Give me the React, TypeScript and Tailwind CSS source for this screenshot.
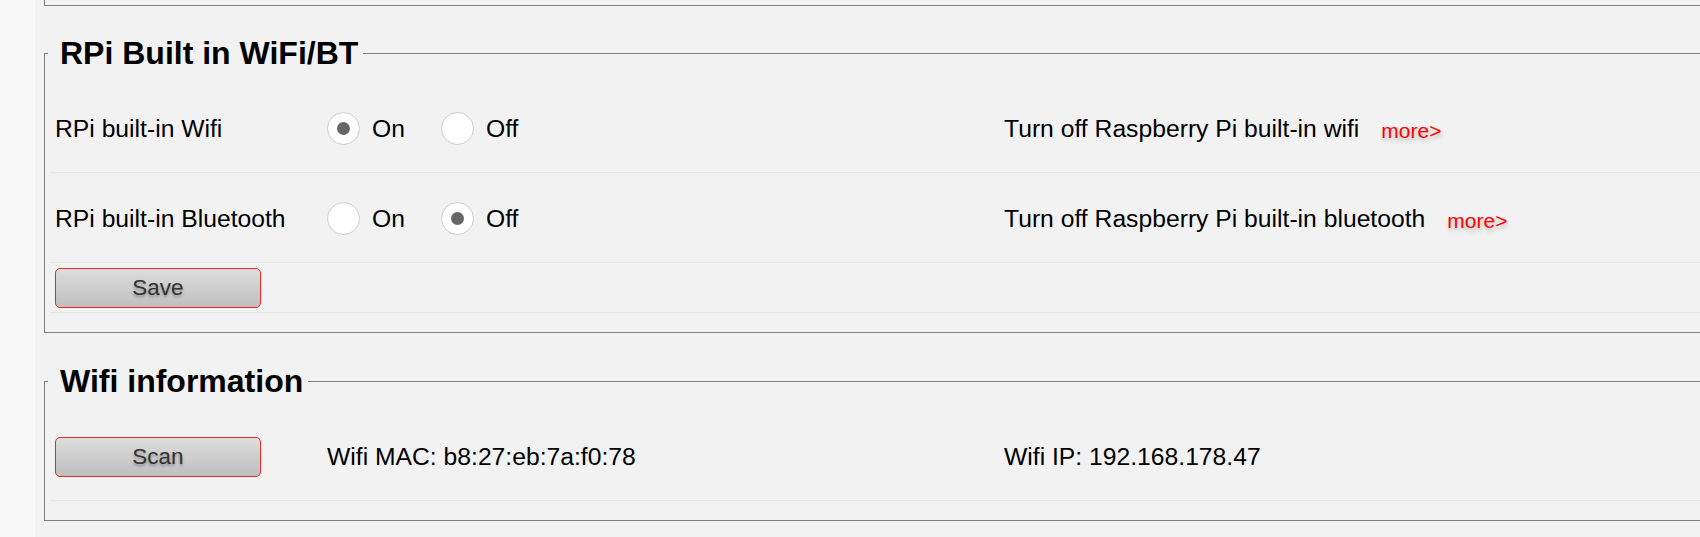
import React from 'react';

const row = 'grid grid-cols-[272px_677px_1fr] items-center border-b border-[#e6e6e6]';

function Radio({ checked }: { checked: boolean }) {
  return (
    <span className="flex h-[33px] w-[33px] shrink-0 items-center justify-center rounded-full border border-[#cdcdcd] bg-white">
      {checked && <span className="h-[13px] w-[13px] rounded-full bg-[#666666]" />}
    </span>
  );
}

function OnOff({ value }: { value: 'on' | 'off' }) {
  return (
    <div className="flex items-center pl-[5px]">
      <label className="flex w-[114px] items-center gap-[12px]">
        <Radio checked={value === 'on'} />
        On
      </label>
      <label className="flex items-center gap-[12px]">
        <Radio checked={value === 'off'} />
        Off
      </label>
    </div>
  );
}

function GrayButton({ children }: { children: React.ReactNode }) {
  return (
    <button className="ml-[5px] h-[40px] w-[206px] rounded-[5px] border border-[#f02525] bg-linear-to-b from-[#dddddd] to-[#bfbfbf] text-[22.5px] text-[#333333] [text-shadow:0_2px_3px_rgba(0,0,0,0.3)]">
      {children}
    </button>
  );
}

function More() {
  return (
    <span className="ml-[22px] align-[-1px] text-[21px] text-[#ff0000] [text-shadow:1px_3px_4px_rgba(0,0,0,0.25)]">
      more&gt;
    </span>
  );
}

function Section({ title, children }: { title: string; children: React.ReactNode }) {
  return (
    <fieldset className="w-[1720px] border border-[#7f7f7f] pt-[12px] pb-[19px] pl-[5px]">
      <legend className="-ml-[2px] pl-[12px] pr-[5px] text-[32px] font-bold leading-[35px]">{title}</legend>
      {children}
    </fieldset>
  );
}

export default function App() {
  return (
    <div className="flex min-h-[537px] bg-[#f2f2f2] font-['Liberation_Sans',Arial,sans-serif] text-[24.7px] text-black">
      <aside className="w-[35px] shrink-0 bg-[#f8f8f8]" />
      <main className="flex-1 overflow-hidden pl-[9px]">
        <div className="h-[6px] w-[1720px] border-b border-l border-[#7f7f7f]" />

        <div className="mt-[30px]">
          <Section title="RPi Built in WiFi/BT">
            <div className={`${row} h-[90px] pt-[3px]`}>
              <div className="pl-[5px]">RPi built-in Wifi</div>
              <OnOff value="on" />
              <div className="pl-[5px]">
                Turn off Raspberry Pi built-in wifi
                <More />
              </div>
            </div>
            <div className={`${row} h-[90px] pt-[3px]`}>
              <div className="pl-[5px]">RPi built-in Bluetooth</div>
              <OnOff value="off" />
              <div className="pl-[5px]">
                Turn off Raspberry Pi built-in bluetooth
                <More />
              </div>
            </div>
            <div className={`${row} h-[50px]`}>
              <div>
                <GrayButton>Save</GrayButton>
              </div>
            </div>
          </Section>
        </div>

        <div className="mt-[31px]">
          <Section title="Wifi information">
            <div className={`${row} h-[90px] pt-[2px]`}>
              <div>
                <GrayButton>Scan</GrayButton>
              </div>
              <div className="pl-[5px]">Wifi MAC: b8:27:eb:7a:f0:78</div>
              <div className="pl-[5px]">Wifi IP: 192.168.178.47</div>
            </div>
          </Section>
        </div>
      </main>
    </div>
  );
}
